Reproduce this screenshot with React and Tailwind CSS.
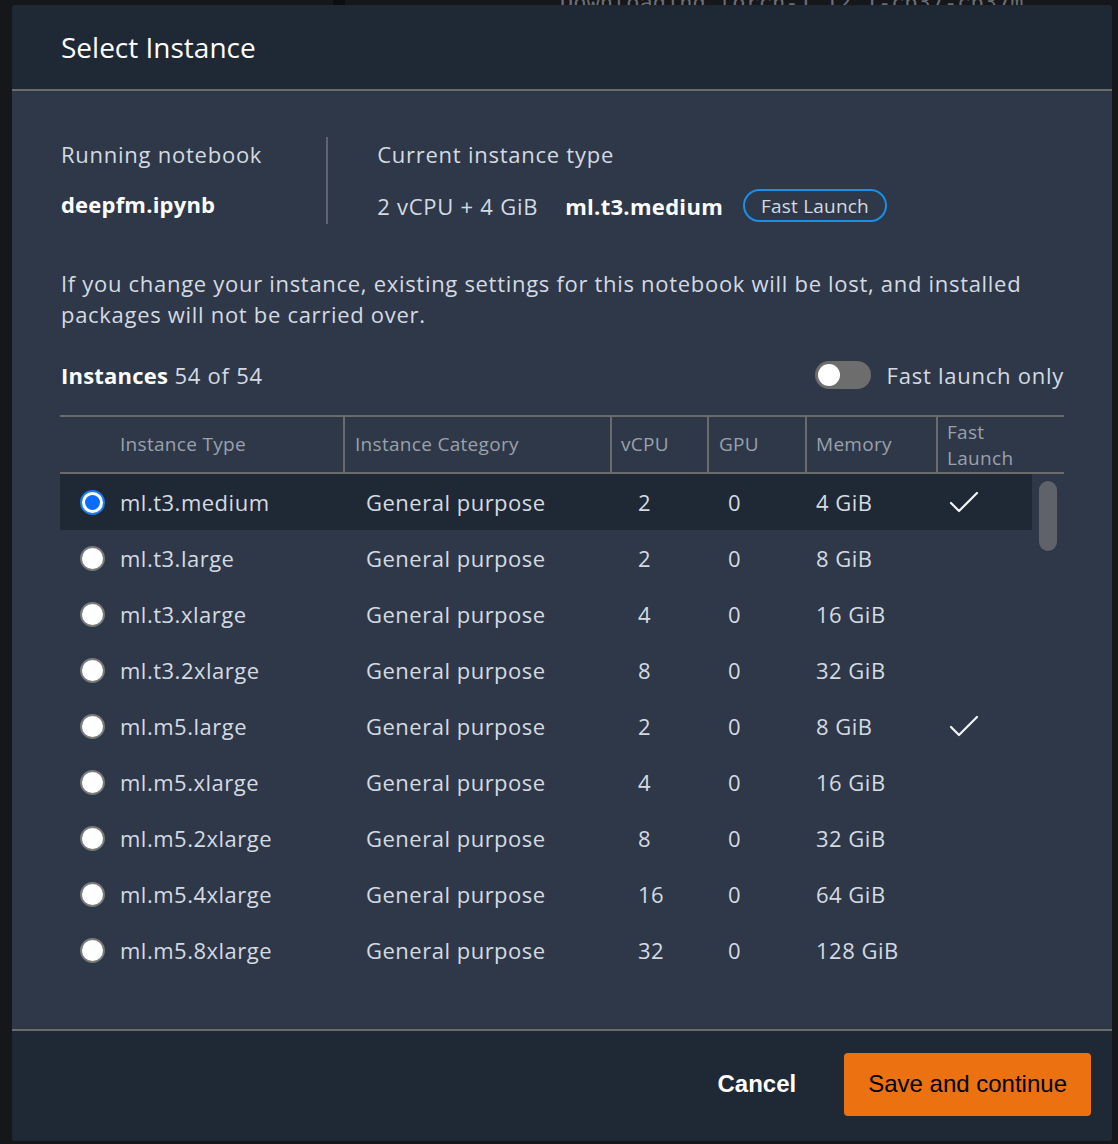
import React from 'react'

const rows = [
  { name: 'ml.t3.medium', cpu: '2', gpu: '0', mem: '4 GiB', fast: true, selected: true },
  { name: 'ml.t3.large', cpu: '2', gpu: '0', mem: '8 GiB' },
  { name: 'ml.t3.xlarge', cpu: '4', gpu: '0', mem: '16 GiB' },
  { name: 'ml.t3.2xlarge', cpu: '8', gpu: '0', mem: '32 GiB' },
  { name: 'ml.m5.large', cpu: '2', gpu: '0', mem: '8 GiB', fast: true },
  { name: 'ml.m5.xlarge', cpu: '4', gpu: '0', mem: '16 GiB' },
  { name: 'ml.m5.2xlarge', cpu: '8', gpu: '0', mem: '32 GiB' },
  { name: 'ml.m5.4xlarge', cpu: '16', gpu: '0', mem: '64 GiB' },
  { name: 'ml.m5.8xlarge', cpu: '32', gpu: '0', mem: '128 GiB' },
]

function Radio({ checked }) {
  if (checked) {
    return (
      <div className="w-[25px] h-[25px] rounded-full border-2 border-[#1a7cf0] bg-white flex items-center justify-center">
        <div className="w-[15px] h-[15px] rounded-full bg-[#0b6cff]" />
      </div>
    )
  }
  return <div className="w-[25px] h-[25px] rounded-full border-2 border-[#7a7a7a] bg-white" />
}

function CheckMark() {
  return (
    <svg width="30" height="22" viewBox="0 0 30 22" fill="none">
      <path d="M2 12 L10 20 L28 2" stroke="#f3f4f6" strokeWidth="2.2" strokeLinecap="round" strokeLinejoin="round" />
    </svg>
  )
}

export default function App() {
  return (
    <div className="relative w-[1118px] h-[1144px] overflow-hidden bg-[#15171b]" style={{ fontFamily: '"Open Sans", "Noto Sans", sans-serif' }}>
      {/* background app, mostly hidden by the dialog */}
      <div className="flex">
        <div className="w-[345px] h-[12px] border-r-[12px] border-[#0d0e10]" />
        <div className="pl-[215px] -mt-[14px] text-[22px] text-[#6b6f75] whitespace-nowrap" style={{ fontFamily: '"DejaVu Sans Mono", monospace' }}>
          Downloading torch-1.12.1-cp37-cp37m
        </div>
      </div>

      {/* dialog */}
      <div className="absolute left-[12px] top-[5px] w-[1100px] h-[1136px] rounded-[4px] overflow-hidden flex flex-col bg-[#2e3849] text-[#d5dae1]">
        <div className="h-[86px] bg-[#1f2835] border-b-2 border-[#6b6b6b] px-[49px] flex items-center pb-[1px]">
          <h1 className="text-[28px] text-white">Select Instance</h1>
        </div>

        <div className="flex-1 px-[48px] pt-[48px] tracking-[0.75px]">
          <div className="flex items-stretch">
            <div className="flex flex-col gap-[20px] pr-[64px] pl-[1px]">
              <div className="text-[22px] leading-[30px]">Running notebook</div>
              <div className="text-[22px] leading-[30px] font-bold text-white tracking-[0.2px]">deepfm.ipynb</div>
            </div>
            <div className="w-[2px] bg-[#5f6470] -my-[2px]" />
            <div className="flex flex-col gap-[20px] pl-[49px]">
              <div className="text-[22px] leading-[30px]">Current instance type</div>
              <div className="flex items-center text-[22px] leading-[30px]">
                <span>2 vCPU + 4 GiB</span>
                <span className="ml-[27px] font-bold text-white tracking-[0.3px]">ml.t3.medium</span>
                <span className="ml-[20px] h-[33px] px-[16px] flex items-center rounded-full border-2 border-[#1b8fe8] text-[19px] tracking-[0.2px]">Fast Launch</span>
              </div>
            </div>
          </div>

          <p className="mt-[46px] text-[22px] leading-[31px] pl-[1px] tracking-[0.7px]">
            If you change your instance, existing settings for this notebook will be lost, and installed packages will not be carried over.
          </p>

          <div className="mt-[31px] flex items-center justify-between h-[28px] pl-[1px]">
            <div className="text-[22px]">
              <span className="font-bold text-white tracking-[0.2px]">Instances</span> 54 of 54
            </div>
            <div className="flex items-center gap-[16px]">
              <div className="w-[56px] h-[28px] rounded-full bg-[#6d6d6d] flex items-center px-[3px]">
                <div className="w-[22px] h-[22px] rounded-full bg-white" />
              </div>
              <span className="text-[22px]">Fast launch only</span>
            </div>
          </div>

          <div className="mt-[26px] tracking-[0.3px]">
            <div className="grid grid-cols-[283px_267px_97px_98px_131px_128px] h-[59px] border-y-2 border-[#6b6b6b] text-[19px] text-[#9aa1ab]">
              <div className="flex items-center pl-[60px]">Instance Type</div>
              <div className="flex items-center pl-[10px] border-l-2 border-[#6b6b6b]">Instance Category</div>
              <div className="flex items-center pl-[9px] border-l-2 border-[#6b6b6b]">vCPU</div>
              <div className="flex items-center pl-[10px] border-l-2 border-[#6b6b6b]">GPU</div>
              <div className="flex items-center pl-[9px] border-l-2 border-[#6b6b6b]">Memory</div>
              <div className="flex items-center pl-[9px] border-l-2 border-[#6b6b6b] leading-[26px]">Fast<br />Launch</div>
            </div>

            <div className="flex h-[504px] overflow-hidden tracking-[0.5px]">
              <div className="w-[972px]">
                {rows.map((r) => (
                  <div
                    key={r.name}
                    className={`grid grid-cols-[283px_267px_97px_98px_131px_96px] h-[56px] items-center text-[22px] ${r.selected ? 'bg-[#1f2835]' : ''}`}
                  >
                    <div className="flex items-center gap-[15px] pl-[20px]">
                      <Radio checked={r.selected} />
                      <span>{r.name}</span>
                    </div>
                    <div className="pl-[23px]">General purpose</div>
                    <div className="pl-[28px]">{r.cpu}</div>
                    <div className="pl-[21px]">{r.gpu}</div>
                    <div className="pl-[11px]">{r.mem}</div>
                    <div className="pl-[13px] flex items-center">{r.fast && <CheckMark />}</div>
                  </div>
                ))}
              </div>
              <div className="w-[32px] pl-[7px] pt-[7px]">
                <div className="w-[18px] h-[70px] rounded-full bg-[#5f6268]" />
              </div>
            </div>
          </div>
        </div>

        <div className="h-[112px] bg-[#1f2835] border-t-2 border-[#6b6b6b] flex items-center justify-end gap-[48px] pr-[21px] pb-[4px]" style={{ fontFamily: '"Liberation Sans", Arial, sans-serif' }}>
          <button className="text-[24px] font-bold text-white">Cancel</button>
          <button className="h-[63px] px-[24px] rounded-[4px] bg-[#ec7211] text-[24px] text-black">Save and continue</button>
        </div>
      </div>
    </div>
  )
}
